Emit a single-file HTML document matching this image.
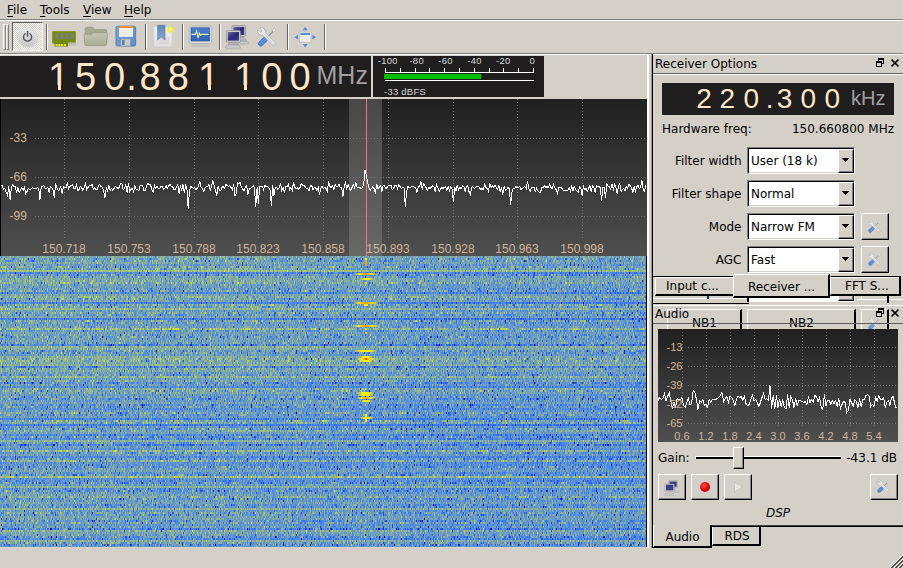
<!DOCTYPE html>
<html><head><meta charset="utf-8"><title>Gqrx</title>
<style>
html,body{margin:0;padding:0;background:#d4d0c8;}
body{width:903px;height:568px;overflow:hidden;position:relative;font-family:"DejaVu Sans","Liberation Sans",sans-serif;font-size:12px;color:#000;}
#w{position:absolute;left:0;top:0;width:903px;height:568px;overflow:hidden;background:#d4d0c8;}
#w div,#w span,#w svg{position:absolute;box-sizing:border-box;}
.t{white-space:nowrap;line-height:14px;height:14px;}
.ar{font-family:"Liberation Sans",sans-serif;}
.hl{height:1px;}
.vl{width:1px;}
.dk{background:#808080;}
.bk{background:#000;}
.wh{background:#fff;}
.sep{width:2px;border-left:1px solid #636363;border-right:1px solid #fff;}
.btn{background:#d4d0c8;border-top:1px solid #fff;border-left:1px solid #fff;border-right:1px solid #000;border-bottom:1px solid #000;box-shadow:inset -1px -1px 0 #808080;}
.cb{background:#fff;border:1px solid;border-color:#808080 #fff #fff #808080;box-shadow:inset 1px 1px 0 #000,inset -1px -1px 0 #d4d0c8;}
.cbb{background:#d4d0c8;border-top:1px solid #fff;border-left:1px solid #fff;border-right:1px solid #000;border-bottom:1px solid #000;box-shadow:inset -1px -1px 0 #808080;}
.dig{font-family:"Liberation Sans",sans-serif;color:#ffe6c8;white-space:nowrap;}
.pl{font-family:"Liberation Sans",sans-serif;font-size:12px;color:#d0b49a;white-space:nowrap;line-height:12px;height:12px;}
u{text-decoration:underline;text-decoration-thickness:1px;text-underline-offset:2px;}
</style></head><body><div id="w">

<span class="t" style="left:7px;top:3px"><u>F</u>ile</span>
<span class="t" style="left:40px;top:3px"><u>T</u>ools</span>
<span class="t" style="left:83px;top:3px"><u>V</u>iew</span>
<span class="t" style="left:124px;top:3px"><u>H</u>elp</span>
<div class="hl dk" style="left:0;top:19px;width:903px"></div>
<div class="hl wh" style="left:0;top:20px;width:903px"></div>
<div class="hl dk" style="left:0;top:53px;width:903px"></div>
<div class="hl wh" style="left:0;top:54px;width:903px"></div>
<div style="left:3px;top:24px;width:3px;height:26px;border-left:1px solid #fff;border-top:1px solid #fff;border-right:1px solid #808080;border-bottom:1px solid #808080"></div>
<div style="left:6px;top:24px;width:3px;height:26px;border-left:1px solid #fff;border-top:1px solid #fff;border-right:1px solid #808080;border-bottom:1px solid #808080"></div>
<div style="left:12px;top:22px;width:31px;height:29px;border-top:1px solid #606060;border-left:1px solid #606060;border-right:1px solid #fff;border-bottom:1px solid #fff;background:conic-gradient(#fff 25%,#d4d0c8 0 50%,#fff 0 75%,#d4d0c8 0) 0 0/2px 2px"></div>
<svg style="left:16px;top:26px" width="24" height="24" viewBox="0 0 24 24">
<defs><linearGradient id="pg" x1="0" y1="0" x2="0" y2="1"><stop offset="0" stop-color="#e6e6e6"/><stop offset="1" stop-color="#c6c6c6"/></linearGradient></defs>
<circle cx="11.6" cy="11.6" r="10.2" fill="#bdbbb5" opacity="0.55"/><circle cx="11.6" cy="11.2" r="10" fill="url(#pg)" stroke="#d8d8d8" stroke-width="0.8"/>
<path d="M9.2 7.7 A4.1 4.1 0 1 0 13.9 7.7" fill="none" stroke="#585858" stroke-width="1.4" stroke-linecap="round"/>
<path d="M11.55 5.4 V10.2" stroke="#585858" stroke-width="1.4" stroke-linecap="round"/>
</svg>
<div class="sep" style="left:46px;top:24px;height:26px"></div>
<div class="sep" style="left:145px;top:24px;height:26px"></div>
<div class="sep" style="left:182px;top:24px;height:26px"></div>
<div class="sep" style="left:219px;top:24px;height:26px"></div>
<div class="sep" style="left:287px;top:24px;height:26px"></div>
<div class="sep" style="left:324px;top:24px;height:26px"></div>
<svg style="left:50px;top:25px" width="28" height="24" viewBox="0 0 28 24">
<rect x="2" y="6" width="24" height="12.5" rx="1.5" fill="#748a12"/>
<rect x="2.5" y="6.5" width="23" height="11.5" rx="1.2" fill="none" stroke="#8ea02a" stroke-width="0.8"/>
<rect x="4.5" y="17.5" width="13.5" height="4" fill="#6f8212"/>
<rect x="18" y="17.5" width="8" height="3" fill="#bdbbb3" opacity="0.9"/>
<g fill="#7d7f7a"><rect x="5.2" y="8" width="3.2" height="6.2" rx="1"/><rect x="10.3" y="8" width="3.2" height="6.2" rx="1"/><rect x="15.4" y="8" width="3.2" height="6.2" rx="1"/><rect x="20.5" y="8" width="3.2" height="6.2" rx="1"/></g>
<g fill="#e6ee20"><rect x="5.5" y="19" width="2" height="2"/><rect x="8.3" y="19" width="2" height="2"/><rect x="11.1" y="19" width="2" height="2"/><rect x="13.9" y="19" width="2" height="2"/></g>
</svg>
<svg style="left:82px;top:24px" width="28" height="26" viewBox="0 0 28 26">
<defs><linearGradient id="fg" x1="0" y1="0" x2="0" y2="1"><stop offset="0" stop-color="#c3c6b4"/><stop offset="1" stop-color="#a9ad97"/></linearGradient></defs>
<path d="M3.2 5.5 Q3.2 3.2 5 3.2 H10.5 L12.5 5.6 H23.5 Q24.6 5.6 24.6 7 V20 H3.2 Z" fill="#a6a994" stroke="#94977f" stroke-width="0.8"/>
<path d="M2 11.5 Q2 10.2 3.5 10.2 H9.5 L11.5 8.6 H24.2 Q25.6 8.6 25.4 10 L24.4 20.5 Q24.2 21.6 23 21.6 H4.2 Q3 21.6 2.9 20.5 Z" fill="url(#fg)" stroke="#95987f" stroke-width="0.8"/>
</svg>
<svg style="left:114px;top:24px" width="24" height="26" viewBox="0 0 24 26">
<defs><linearGradient id="sg" x1="0" y1="0" x2="1" y2="1"><stop offset="0" stop-color="#7fa6dc"/><stop offset="1" stop-color="#5b8bd0"/></linearGradient></defs>
<rect x="2" y="2.2" width="19.6" height="19.8" rx="1.5" fill="url(#sg)" stroke="#4a78b8" stroke-width="0.9"/>
<rect x="5" y="2.2" width="14" height="10.6" fill="#f4f4f2"/>
<rect x="5" y="2.2" width="14" height="1.8" fill="#f08228"/>
<g stroke="#dcdcd8" stroke-width="0.7"><path d="M5 6.2H19M5 8.2H19M5 10.2H19"/></g>
<rect x="6.6" y="15" width="10" height="7" fill="#c9ccc8" stroke="#8a8f98" stroke-width="0.6"/>
<rect x="8" y="16" width="2.6" height="5" fill="#5b80b8"/>
</svg>
<svg style="left:150px;top:23px" width="26" height="27" viewBox="0 0 26 27">
<defs><linearGradient id="bg1" x1="0" y1="0" x2="0" y2="1"><stop offset="0" stop-color="#f2f2f2"/><stop offset="1" stop-color="#dedede"/></linearGradient>
<linearGradient id="bg2" x1="0" y1="0" x2="0" y2="1"><stop offset="0" stop-color="#5f86b8"/><stop offset="1" stop-color="#8aa6cc"/></linearGradient>
<radialGradient id="yg"><stop offset="0" stop-color="#ffffc0"/><stop offset="0.45" stop-color="#f6ee30"/><stop offset="1" stop-color="#f0e63c" stop-opacity="0.1"/></radialGradient></defs>
<rect x="3.6" y="3.6" width="18.6" height="20.4" rx="1" fill="url(#bg1)" stroke="#c9c9c9" stroke-width="0.8"/>
<rect x="9" y="14" width="10" height="7" fill="#d6d6d6" opacity="0.7"/>
<path d="M7.6 2.2 H15 V17 L11.3 14 L7.6 17 Z" fill="url(#bg2)" stroke="#5578a8" stroke-width="0.6"/>
<circle cx="20.4" cy="6.6" r="4.2" fill="url(#yg)"/>
</svg>
<svg style="left:187px;top:24px" width="27" height="26" viewBox="0 0 27 26">
<defs><linearGradient id="mg" x1="0" y1="0" x2="0" y2="1"><stop offset="0" stop-color="#4d7fd0"/><stop offset="1" stop-color="#2f5fb0"/></linearGradient></defs>
<rect x="2" y="2" width="22.6" height="17.6" rx="2" fill="#dcdcd8" stroke="#b4b4b0" stroke-width="0.9"/>
<rect x="4" y="3.8" width="18.6" height="13.2" fill="url(#mg)" stroke="#2a4f98" stroke-width="0.6"/>
<path d="M4.5 10.4 H8.4 L9.6 7 L11 14 L12.4 9 L13.4 11.2 L14.6 10.4 H22" fill="none" stroke="#d8f5b0" stroke-width="1.1"/>
<path d="M6 19.8 H20.6 L22.4 22.4 H4.2 Z" fill="#c8c8c4" stroke="#aaa" stroke-width="0.5"/>
</svg>
<svg style="left:223px;top:23px" width="28" height="28" viewBox="0 0 28 28">
<defs><linearGradient id="cg" x1="0" y1="0" x2="1" y2="1"><stop offset="0" stop-color="#6a6aa8"/><stop offset="0.5" stop-color="#2c2a78"/><stop offset="1" stop-color="#3c3a88"/></linearGradient></defs>
<rect x="9" y="2.6" width="13.6" height="11" rx="1" fill="#c6c6c6" stroke="#8c8c8c" stroke-width="0.7"/>
<rect x="10.4" y="4" width="10.8" height="8" fill="url(#cg)"/>
<path d="M14 14 H20 L24 18 H17 Z" fill="#bdbdbd" stroke="#909090" stroke-width="0.5"/>
<path d="M16 18.4 H25 L25.4 21 H17 Z" fill="#c9c9c9" stroke="#999" stroke-width="0.5"/>
<rect x="3.4" y="7.6" width="14" height="11.6" rx="1" fill="#cfcfcf" stroke="#8c8c8c" stroke-width="0.7"/>
<rect x="4.8" y="9" width="11.2" height="8.6" fill="url(#cg)"/>
<path d="M6 19.4 H14.6 L15.2 21.4 H5.2 Z" fill="#b8b8b8" stroke="#909090" stroke-width="0.5"/>
<path d="M3.6 22 H16.4 L17.4 25.2 H2.4 Z" fill="#cdcdcd" stroke="#999" stroke-width="0.6"/>
</svg>
<svg style="left:256px;top:26px;opacity:1.0" width="24" height="24" viewBox="0 0 24 24">
<g transform="translate(19.2 3.2) rotate(135)">
<path d="M0 -1.5 L0 1.5 L3.2 0.7 L3.2 -0.7 Z" fill="#f4f4f4" stroke="#a0a0a0" stroke-width="0.5"/>
<rect x="3.2" y="-0.55" width="9" height="1.1" fill="#8c8c8c"/>
<rect x="12.2" y="-2.4" width="10.6" height="4.8" rx="2" fill="#4a80d0" stroke="#3a6ab8" stroke-width="0.6"/>
<path d="M13.4 -0.9 H21.6 M13.4 0.9 H21.6" stroke="#79a3e2" stroke-width="0.7" fill="none"/>
</g>
<g transform="translate(5.5 5.4) rotate(-45)">
<rect x="-1.8" y="1.5" width="3.6" height="18.2" rx="1.8" fill="#ededed" stroke="#a4a4a4" stroke-width="0.7"/>
<circle r="3.8" fill="#ededed" stroke="#a4a4a4" stroke-width="0.7"/>
<rect x="-1.45" y="1.2" width="2.9" height="4" fill="#ededed"/>
<path d="M-1.3 -4.6 V-1 A1.3 1.3 0 0 0 1.3 -1 V-4.6 Z" fill="#d4d0c8"/>
<path d="M-1.3 -3.5 V-1 A1.3 1.3 0 0 0 1.3 -1 V-3.5" fill="none" stroke="#a4a4a4" stroke-width="0.6"/>
<rect x="-0.5" y="4.5" width="1" height="11" fill="#c3d2dc"/>
<circle cy="17.6" r="0.7" fill="#b0b0b0"/>
</g>
</svg>
<svg style="left:292px;top:25px" width="26" height="24" viewBox="0 0 26 24">
<rect x="7.4" y="7" width="11.6" height="10.2" fill="#ececec" stroke="#bdbdbd" stroke-width="0.8"/>
<rect x="8.4" y="8" width="9.6" height="2" fill="#5f8fd0"/>
<g fill="#5a8ad0"><path d="M13.2 1.8 L15.6 5.2 H10.8 Z"/><path d="M13.2 22.4 L15.6 19 H10.8 Z"/><path d="M2.4 12.2 L6 9.8 V14.6 Z"/><path d="M24 12.2 L20.4 9.8 V14.6 Z"/></g>
</svg>
<div style="left:0;top:56px;width:371px;height:41px;background:#1f1d1d"></div>
<span class="dig" style="left:43.5px;top:55.5px;width:30px;text-align:center;font-size:38px;line-height:42px">1</span>
<div style="left:50.0px;top:85px;width:8.0px;height:6px;background:#1f1d1d"></div>
<div style="left:61.0px;top:85px;width:7px;height:6px;background:#1f1d1d"></div>
<span class="dig" style="left:70.5px;top:55.5px;width:30px;text-align:center;font-size:38px;line-height:42px">5</span>
<span class="dig" style="left:99.5px;top:55.5px;width:30px;text-align:center;font-size:38px;line-height:42px">0</span>
<span class="dig" style="left:135px;top:55.5px;width:30px;text-align:center;font-size:38px;line-height:42px">8</span>
<span class="dig" style="left:163.4px;top:55.5px;width:30px;text-align:center;font-size:38px;line-height:42px">8</span>
<span class="dig" style="left:193.5px;top:55.5px;width:30px;text-align:center;font-size:38px;line-height:42px">1</span>
<div style="left:200.0px;top:85px;width:8.0px;height:6px;background:#1f1d1d"></div>
<div style="left:211.0px;top:85px;width:7px;height:6px;background:#1f1d1d"></div>
<span class="dig" style="left:229.5px;top:55.5px;width:30px;text-align:center;font-size:38px;line-height:42px">1</span>
<div style="left:236.0px;top:85px;width:8.0px;height:6px;background:#1f1d1d"></div>
<div style="left:247.0px;top:85px;width:7px;height:6px;background:#1f1d1d"></div>
<span class="dig" style="left:256.8px;top:55.5px;width:30px;text-align:center;font-size:38px;line-height:42px">0</span>
<span class="dig" style="left:285px;top:55.5px;width:30px;text-align:center;font-size:38px;line-height:42px">0</span>
<span class="dig" style="left:121.5px;top:55.5px;width:20px;text-align:center;font-size:38px;line-height:42px">.</span>
<span class="dig" style="left:316.5px;top:60px;font-size:25px;line-height:30px;color:#a0a0a4">MHz</span>
<div style="left:373px;top:56px;width:171px;height:41px;background:#1f1d1d"></div>
<svg style="left:373px;top:56px" width="171" height="41" shape-rendering="crispEdges">
<path d="M12 16.5 H161" stroke="#fff" fill="none"/>
<path d="M12.5 12 V17" stroke="#fff" fill="none"/>
<path d="M27.5 12 V17" stroke="#fff" fill="none"/>
<path d="M42.5 12 V17" stroke="#fff" fill="none"/>
<path d="M56.5 12 V17" stroke="#fff" fill="none"/>
<path d="M71.5 12 V17" stroke="#fff" fill="none"/>
<path d="M86.5 12 V17" stroke="#fff" fill="none"/>
<path d="M101.5 12 V17" stroke="#fff" fill="none"/>
<path d="M116.5 12 V17" stroke="#fff" fill="none"/>
<path d="M130.5 12 V17" stroke="#fff" fill="none"/>
<path d="M145.5 12 V17" stroke="#fff" fill="none"/>
<path d="M160.5 12 V17" stroke="#fff" fill="none"/>
<rect x="11" y="18" width="97" height="5" fill="#00be00"/>
<path d="M12 24.5 H161" stroke="#fff" fill="none"/>
</svg>
<span class="ar" style="left:367.8px;top:55px;width:40px;text-align:center;font-size:9.4px;letter-spacing:0.35px;line-height:12px;color:#dadada">-100</span>
<span class="ar" style="left:396.7px;top:55px;width:40px;text-align:center;font-size:9.4px;letter-spacing:0.35px;line-height:12px;color:#dadada">-80</span>
<span class="ar" style="left:425.6px;top:55px;width:40px;text-align:center;font-size:9.4px;letter-spacing:0.35px;line-height:12px;color:#dadada">-60</span>
<span class="ar" style="left:454.5px;top:55px;width:40px;text-align:center;font-size:9.4px;letter-spacing:0.35px;line-height:12px;color:#dadada">-40</span>
<span class="ar" style="left:483.4px;top:55px;width:40px;text-align:center;font-size:9.4px;letter-spacing:0.35px;line-height:12px;color:#dadada">-20</span>
<span class="ar" style="left:512.3px;top:55px;width:40px;text-align:center;font-size:9.4px;letter-spacing:0.35px;line-height:12px;color:#dadada">0</span>
<span class="ar" style="left:384px;top:85.5px;font-size:9.4px;letter-spacing:0.3px;line-height:12px;color:#dadada;white-space:nowrap">-33 dBFS</span>
<div style="left:0;top:99px;width:647px;height:157px;background:linear-gradient(#202020,#4f4f4f)"></div>
<div style="left:0;top:99px;width:1px;height:157px;background:#000"></div>
<svg style="left:0;top:99px" width="647" height="157" shape-rendering="crispEdges">
<rect x="349" y="0" width="33" height="157" fill="#a0a0a4" fill-opacity="0.31"/>
<path d="M35 39.5 H647" stroke="#6e6e6e" stroke-dasharray="1 2" fill="none"/>
<path d="M35 78.5 H647" stroke="#6e6e6e" stroke-dasharray="1 2" fill="none"/>
<path d="M35 117.5 H647" stroke="#6e6e6e" stroke-dasharray="1 2" fill="none"/>
<path d="M64.5 0 V139" stroke="#6e6e6e" stroke-dasharray="1 2" fill="none"/>
<path d="M129.5 0 V139" stroke="#6e6e6e" stroke-dasharray="1 2" fill="none"/>
<path d="M194.5 0 V139" stroke="#6e6e6e" stroke-dasharray="1 2" fill="none"/>
<path d="M258.5 0 V139" stroke="#6e6e6e" stroke-dasharray="1 2" fill="none"/>
<path d="M323.5 0 V139" stroke="#6e6e6e" stroke-dasharray="1 2" fill="none"/>
<path d="M388.5 0 V139" stroke="#6e6e6e" stroke-dasharray="1 2" fill="none"/>
<path d="M453.5 0 V139" stroke="#6e6e6e" stroke-dasharray="1 2" fill="none"/>
<path d="M517.5 0 V139" stroke="#6e6e6e" stroke-dasharray="1 2" fill="none"/>
<path d="M582.5 0 V139" stroke="#6e6e6e" stroke-dasharray="1 2" fill="none"/>
<path d="M366.5 0 V157" stroke="#ff7171" fill="none"/>
<polyline points="1,86.5 2.3,86.5 3.6,90.5 4.9,89.5 6.2,93.5 7.5,96.5 8.8,87.5 10.1,100.5 11.4,88.5 12.7,85.5 14,87.5 15.3,87.5 16.6,93.5 17.9,88.5 19.2,93.5 20.5,90.5 21.8,88.5 23.1,91.5 24.4,87.5 25.7,94.5 27,92.5 28.3,89.5 29.6,90.5 30.9,90.5 32.2,88.5 33.5,89.5 34.8,89.5 36.1,89.5 37.4,88.5 38.7,89.5 40,100.5 41.3,87.5 42.6,87.5 43.9,86.5 45.2,89.5 46.5,89.5 47.8,88.5 49.1,93.5 50.4,87.5 51.7,88.5 53,90.5 54.3,98.5 55.6,84.5 56.9,88.5 58.2,91.5 59.5,90.5 60.8,87.5 62.1,94.5 63.4,87.5 64.7,88.5 66,88.5 67.3,84.5 68.6,89.5 69.9,87.5 71.2,86.5 72.5,85.5 73.8,89.5 75.1,89.5 76.4,85.5 77.7,91.5 79,90.5 80.3,87.5 81.6,88.5 82.9,91.5 84.2,88.5 85.5,84.5 86.8,90.5 88.1,88.5 89.4,86.5 90.7,86.5 92,85.5 93.3,90.5 94.6,88.5 95.9,90.5 97.2,90.5 98.5,86.5 99.8,85.5 101.1,87.5 102.4,88.5 103.7,92.5 105,98.5 106.3,88.5 107.6,91.5 108.9,86.5 110.2,91.5 111.5,89.5 112.8,91.5 114.1,89.5 115.4,87.5 116.7,88.5 118,89.5 119.3,88.5 120.6,84.5 121.9,84.5 123.2,90.5 124.5,89.5 125.8,85.5 127.1,93.5 128.4,84.5 129.7,92.5 131,90.5 132.3,89.5 133.6,92.5 134.9,86.5 136.2,90.5 137.5,90.5 138.8,91.5 140.1,86.5 141.4,86.5 142.7,86.5 144,91.5 145.3,91.5 146.6,86.5 147.9,84.5 149.2,85.5 150.5,85.5 151.8,90.5 153.1,93.5 154.4,86.5 155.7,89.5 157,87.5 158.3,89.5 159.6,89.5 160.9,87.5 162.2,87.5 163.5,90.5 164.8,89.5 166.1,86.5 167.4,89.5 168.7,86.5 170,85.5 171.3,87.5 172.6,87.5 173.9,90.5 175.2,90.5 176.5,88.5 177.8,85.5 179.1,94.5 180.4,86.5 181.7,91.5 183,85.5 184.3,93.5 185.6,86.5 186.9,89.5 188.2,109.5 189.5,91.5 190.8,87.5 192.1,88.5 193.4,89.5 194.7,88.5 196,90.5 197.3,89.5 198.6,86.5 199.9,82.5 201.2,88.5 202.5,89.5 203.8,92.5 205.1,88.5 206.4,87.5 207.7,87.5 209,85.5 210.3,91.5 211.6,86.5 212.9,81.5 214.2,86.5 215.5,91.5 216.8,96.5 218.1,87.5 219.4,91.5 220.7,91.5 222,88.5 223.3,87.5 224.6,89.5 225.9,85.5 227.2,86.5 228.5,87.5 229.8,86.5 231.1,88.5 232.4,90.5 233.7,85.5 235,96.5 236.3,94.5 237.6,83.5 238.9,84.5 240.2,83.5 241.5,88.5 242.8,90.5 244.1,91.5 245.4,87.5 246.7,86.5 248,95.5 249.3,89.5 250.6,89.5 251.9,88.5 253.2,86.5 254.5,89.5 255.8,107.5 257.1,88.5 258.4,104.5 259.7,87.5 261,87.5 262.3,87.5 263.6,90.5 264.9,86.5 266.2,87.5 267.5,87.5 268.8,88.5 270.1,91.5 271.4,106.5 272.7,86.5 274,96.5 275.3,88.5 276.6,88.5 277.9,90.5 279.2,88.5 280.5,84.5 281.8,91.5 283.1,88.5 284.4,93.5 285.7,87.5 287,87.5 288.3,85.5 289.6,90.5 290.9,88.5 292.2,91.5 293.5,83.5 294.8,88.5 296.1,89.5 297.4,88.5 298.7,90.5 300,88.5 301.3,84.5 302.6,86.5 303.9,86.5 305.2,87.5 306.5,89.5 307.8,89.5 309.1,91.5 310.4,86.5 311.7,86.5 313,90.5 314.3,88.5 315.6,88.5 316.9,91.5 318.2,88.5 319.5,95.5 320.8,89.5 322.1,87.5 323.4,89.5 324.7,88.5 326,89.5 327.3,92.5 328.6,82.5 329.9,87.5 331.2,88.5 332.5,86.5 333.8,90.5 335.1,85.5 336.4,87.5 337.7,87.5 339,85.5 340.3,88.5 341.6,88.5 342.9,97.5 344.2,87.5 345.5,83.5 346.8,89.5 348.1,85.5 349.4,89.5 350.7,91.5 352,88.5 353.3,85.5 354.6,88.5 355.9,83.5 357.2,88.5 358.5,88.5 359.8,88.5 361.1,89.5 362.4,88.5 363.7,85.5 365,71.5 366.3,75.5 367.6,83.5 368.9,88.5 370.2,91.5 371.5,89.5 372.8,87.5 374.1,89.5 375.4,94.5 376.7,85.5 378,89.5 379.3,88.5 380.6,86.5 381.9,92.5 383.2,86.5 384.5,86.5 385.8,89.5 387.1,88.5 388.4,86.5 389.7,86.5 391,86.5 392.3,90.5 393.6,89.5 394.9,86.5 396.2,86.5 397.5,89.5 398.8,85.5 400.1,87.5 401.4,89.5 402.7,88.5 404,88.5 405.3,107.5 406.6,92.5 407.9,87.5 409.2,88.5 410.5,88.5 411.8,87.5 413.1,87.5 414.4,88.5 415.7,88.5 417,93.5 418.3,87.5 419.6,87.5 420.9,82.5 422.2,90.5 423.5,84.5 424.8,86.5 426.1,88.5 427.4,91.5 428.7,88.5 430,89.5 431.3,88.5 432.6,86.5 433.9,87.5 435.2,92.5 436.5,85.5 437.8,88.5 439.1,92.5 440.4,90.5 441.7,88.5 443,89.5 444.3,88.5 445.6,87.5 446.9,91.5 448.2,87.5 449.5,91.5 450.8,87.5 452.1,90.5 453.4,102.5 454.7,88.5 456,91.5 457.3,86.5 458.6,90.5 459.9,88.5 461.2,89.5 462.5,86.5 463.8,87.5 465.1,92.5 466.4,87.5 467.7,86.5 469,92.5 470.3,95.5 471.6,88.5 472.9,87.5 474.2,89.5 475.5,88.5 476.8,87.5 478.1,87.5 479.4,88.5 480.7,90.5 482,89.5 483.3,90.5 484.6,85.5 485.9,88.5 487.2,89.5 488.5,92.5 489.8,84.5 491.1,88.5 492.4,86.5 493.7,88.5 495,86.5 496.3,88.5 497.6,90.5 498.9,86.5 500.2,92.5 501.5,88.5 502.8,95.5 504.1,87.5 505.4,91.5 506.7,90.5 508,88.5 509.3,89.5 510.6,105.5 511.9,93.5 513.2,89.5 514.5,89.5 515.8,87.5 517.1,88.5 518.4,88.5 519.7,87.5 521,90.5 522.3,89.5 523.6,88.5 524.9,87.5 526.2,89.5 527.5,82.5 528.8,89.5 530.1,92.5 531.4,88.5 532.7,88.5 534,88.5 535.3,92.5 536.6,89.5 537.9,91.5 539.2,93.5 540.5,93.5 541.8,88.5 543.1,88.5 544.4,86.5 545.7,88.5 547,87.5 548.3,88.5 549.6,85.5 550.9,88.5 552.2,89.5 553.5,85.5 554.8,88.5 556.1,90.5 557.4,94.5 558.7,88.5 560,88.5 561.3,88.5 562.6,90.5 563.9,91.5 565.2,91.5 566.5,91.5 567.8,91.5 569.1,88.5 570.4,92.5 571.7,87.5 573,91.5 574.3,87.5 575.6,90.5 576.9,91.5 578.2,93.5 579.5,87.5 580.8,88.5 582.1,96.5 583.4,87.5 584.7,90.5 586,89.5 587.3,92.5 588.6,89.5 589.9,86.5 591.2,92.5 592.5,86.5 593.8,88.5 595.1,93.5 596.4,86.5 597.7,87.5 599,87.5 600.3,88.5 601.6,101.5 602.9,88.5 604.2,88.5 605.5,98.5 606.8,84.5 608.1,87.5 609.4,87.5 610.7,90.5 612,85.5 613.3,90.5 614.6,85.5 615.9,88.5 617.2,94.5 618.5,87.5 619.8,84.5 621.1,92.5 622.4,90.5 623.7,89.5 625,91.5 626.3,87.5 627.6,89.5 628.9,85.5 630.2,86.5 631.5,88.5 632.8,93.5 634.1,87.5 635.4,92.5 636.7,87.5 638,86.5 639.3,89.5 640.6,88.5 641.9,81.5 643.2,90.5 644.5,92.5 645.8,86.5" stroke="#fff" fill="none" stroke-width="1"/>
</svg>
<span class="pl" style="left:9.5px;top:132px">-33</span>
<span class="pl" style="left:9.5px;top:171px">-66</span>
<span class="pl" style="left:9.5px;top:210px">-99</span>
<span class="pl" style="left:34px;top:243px;width:60px;text-align:center">150.718</span>
<span class="pl" style="left:99px;top:243px;width:60px;text-align:center">150.753</span>
<span class="pl" style="left:164px;top:243px;width:60px;text-align:center">150.788</span>
<span class="pl" style="left:228px;top:243px;width:60px;text-align:center">150.823</span>
<span class="pl" style="left:293px;top:243px;width:60px;text-align:center">150.858</span>
<span class="pl" style="left:358px;top:243px;width:60px;text-align:center">150.893</span>
<span class="pl" style="left:423px;top:243px;width:60px;text-align:center">150.928</span>
<span class="pl" style="left:487px;top:243px;width:60px;text-align:center">150.963</span>
<span class="pl" style="left:552px;top:243px;width:60px;text-align:center">150.998</span>
<svg style="left:0;top:256px" width="647" height="291">
<defs><linearGradient id="rp" x1="0" y1="0" x2="0" y2="1"><stop offset="0.0000" stop-color="rgb(147,147,147)"/><stop offset="0.0275" stop-color="rgb(142,142,142)"/><stop offset="0.0687" stop-color="rgb(142,142,142)"/><stop offset="0.2062" stop-color="rgb(138,138,138)"/><stop offset="0.3299" stop-color="rgb(138,138,138)"/><stop offset="0.3505" stop-color="rgb(158,158,158)"/><stop offset="0.3780" stop-color="rgb(158,158,158)"/><stop offset="0.3986" stop-color="rgb(138,138,138)"/><stop offset="0.4467" stop-color="rgb(132,132,132)"/><stop offset="0.5155" stop-color="rgb(128,128,128)"/><stop offset="0.6873" stop-color="rgb(128,128,128)"/><stop offset="0.8247" stop-color="rgb(132,132,132)"/><stop offset="1.0000" stop-color="rgb(132,132,132)"/></linearGradient><linearGradient id="hp" x1="0" y1="0" x2="1" y2="0"><stop offset="0.0000" stop-color="rgb(136,136,136)"/><stop offset="0.3096" stop-color="rgb(134,134,134)"/><stop offset="0.5108" stop-color="rgb(129,129,129)"/><stop offset="0.6502" stop-color="rgb(124,124,124)"/><stop offset="1.0000" stop-color="rgb(122,122,122)"/></linearGradient>
<filter id="wf" x="0" y="0" width="646" height="291" filterUnits="userSpaceOnUse" color-interpolation-filters="sRGB">
<feTurbulence type="fractalNoise" baseFrequency="0.78 0.87" numOctaves="1" seed="3"/>
<feColorMatrix type="matrix" values="1 0 0 0 0  1 0 0 0 0  1 0 0 0 0  0 0 0 0 1"/>
<feComponentTransfer result="a"><feFuncR type="table" tableValues="0.1203 0.1326 0.1450 0.1573 0.1696 0.1819 0.1942 0.2065 0.2188 0.2312 0.2435 0.2558 0.2681 0.2804 0.2927 0.3050 0.3174 0.3297 0.3420 0.3543 0.3666 0.3789 0.3894 0.3938 0.3981 0.4025 0.4069 0.4113 0.4157 0.4201 0.4245 0.4289 0.4333 0.4377 0.4421 0.4465 0.4509 0.4553 0.4597 0.4641 0.4685 0.4729 0.4773 0.4817 0.4876 0.4951 0.5025 0.5100 0.5175 0.5250 0.5324 0.5399 0.5474 0.5549 0.5624 0.5698 0.5773 0.5848 0.5923 0.5997 0.6072 0.6147 0.6222 0.6296 0.6371"/><feFuncG type="table" tableValues="0.1203 0.1326 0.1450 0.1573 0.1696 0.1819 0.1942 0.2065 0.2188 0.2312 0.2435 0.2558 0.2681 0.2804 0.2927 0.3050 0.3174 0.3297 0.3420 0.3543 0.3666 0.3789 0.3894 0.3938 0.3981 0.4025 0.4069 0.4113 0.4157 0.4201 0.4245 0.4289 0.4333 0.4377 0.4421 0.4465 0.4509 0.4553 0.4597 0.4641 0.4685 0.4729 0.4773 0.4817 0.4876 0.4951 0.5025 0.5100 0.5175 0.5250 0.5324 0.5399 0.5474 0.5549 0.5624 0.5698 0.5773 0.5848 0.5923 0.5997 0.6072 0.6147 0.6222 0.6296 0.6371"/><feFuncB type="table" tableValues="0.1203 0.1326 0.1450 0.1573 0.1696 0.1819 0.1942 0.2065 0.2188 0.2312 0.2435 0.2558 0.2681 0.2804 0.2927 0.3050 0.3174 0.3297 0.3420 0.3543 0.3666 0.3789 0.3894 0.3938 0.3981 0.4025 0.4069 0.4113 0.4157 0.4201 0.4245 0.4289 0.4333 0.4377 0.4421 0.4465 0.4509 0.4553 0.4597 0.4641 0.4685 0.4729 0.4773 0.4817 0.4876 0.4951 0.5025 0.5100 0.5175 0.5250 0.5324 0.5399 0.5474 0.5549 0.5624 0.5698 0.5773 0.5848 0.5923 0.5997 0.6072 0.6147 0.6222 0.6296 0.6371"/></feComponentTransfer>
<feTurbulence type="fractalNoise" baseFrequency="0.00003 0.31" numOctaves="1" seed="8"/>
<feColorMatrix type="matrix" values="0.2 0 0 0 0  0.2 0 0 0 0  0.2 0 0 0 0  0 0 0 0 1" result="b"/>
<feComposite in="a" in2="b" operator="arithmetic" k1="0" k2="1" k3="1" k4="-0.1" result="ab"/>
<feComposite in="ab" in2="SourceGraphic" operator="arithmetic" k1="0" k2="1" k3="0.4" k4="-0.2"/>
<feComponentTransfer result="c">
<feFuncR type="table" tableValues="0 0 0 0 0 0 0 0 0 0 0 0 0 0 0 0.039 0.078 0.118 0.157 0.196 0.235 0.312 0.388 0.465 0.541 0.618 0.694 0.771 0.847 0.924 1 1 1 1 1 1 1 1 1 1 1 1 1 1 1 1 1 1 1 1 1 1"/>
<feFuncG type="table" tableValues="0 0 0 0 0 0 0 0 0 0 0 0 0 0 0 0.082 0.163 0.245 0.327 0.408 0.49 0.541 0.592 0.643 0.694 0.745 0.796 0.847 0.898 0.949 1 0.95 0.9 0.85 0.8 0.75 0.7 0.65 0.6 0.55 0.5 0.45 0.4 0.35 0.3 0.25 0.2 0.15 0.1 0.05 0 1"/>
<feFuncB type="table" tableValues="0 0 0 0 0 0.055 0.11 0.165 0.22 0.275 0.329 0.384 0.439 0.494 0.549 0.624 0.699 0.775 0.85 0.925 1 0.9 0.8 0.7 0.6 0.5 0.4 0.3 0.2 0.1 0 0 0 0 0 0 0 0 0 0 0 0 0 0 0 0 0 0 0 0 0 1"/>
</feComponentTransfer>
<feFlood x="0" y="0" width="646" height="1" flood-color="#000" result="f"/>
<feOffset in="f" dx="0" dy="0" x="0" y="0" width="646" height="2" result="t"/>
<feTile in="t" result="m"/>
<feComposite in="c" in2="m" operator="in" result="e"/>
<feOffset in="e" dx="0" dy="1" result="o"/>
<feMerge><feMergeNode in="o"/><feMergeNode in="e"/></feMerge>
</filter></defs>
<rect x="0" y="0" width="647" height="291" fill="#000"/><rect x="0" y="0" width="646" height="291" fill="#5f93d8"/>
<g filter="url(#wf)"><rect x="0" y="0" width="646" height="291" fill="url(#rp)"/><rect x="0" y="0" width="646" height="291" fill="url(#hp)" opacity="0.5"/></g>
</svg>
<svg style="left:340px;top:256px" width="52" height="291" shape-rendering="crispEdges">
<defs><linearGradient id="sm" x1="0" x2="1"><stop offset="0" stop-color="#e8e840" stop-opacity="0.2"/><stop offset="0.25" stop-color="#ffe600"/><stop offset="0.5" stop-color="#ff9a00"/><stop offset="0.75" stop-color="#ffe600"/><stop offset="1" stop-color="#e8e840" stop-opacity="0.2"/></linearGradient><linearGradient id="sy" x1="0" x2="1"><stop offset="0" stop-color="#e8e840" stop-opacity="0.2"/><stop offset="0.3" stop-color="#fff000"/><stop offset="0.7" stop-color="#fff000"/><stop offset="1" stop-color="#e8e840" stop-opacity="0.2"/></linearGradient></defs>
<rect x="25" y="2" width="2" height="2" fill="#ffe000"/>
<rect x="25" y="4" width="2" height="6" fill="#ffa000"/>
<rect x="14" y="17" width="23" height="2" fill="url(#sm)"/>
<rect x="21" y="22" width="12" height="2" fill="url(#sy)"/>
<rect x="25" y="26" width="2" height="2" fill="#ffc000"/>
<rect x="13" y="46" width="26" height="2" fill="url(#sm)"/>
<rect x="24" y="48" width="4" height="2" fill="#ffe800"/>
<rect x="12" y="69" width="27" height="2" fill="url(#sm)"/>
<rect x="25" y="76" width="2" height="2" fill="#ffc000"/>
<rect x="15" y="94" width="22" height="2" fill="url(#sy)"/>
<rect x="20" y="100" width="12" height="2" fill="url(#sy)"/>
<rect x="17" y="102" width="18" height="2" fill="url(#sm)"/>
<rect x="25" y="102" width="2" height="2" fill="#ff5000"/>
<rect x="19" y="104" width="14" height="2" fill="url(#sy)"/>
<rect x="18" y="136" width="15" height="4" fill="url(#sy)"/>
<rect x="17" y="141" width="18" height="2" fill="url(#sm)"/>
<rect x="21" y="144" width="10" height="2" fill="url(#sy)"/>
<rect x="20" y="161" width="13" height="2" fill="url(#sy)"/>
<rect x="25" y="158" width="2" height="8" fill="#ffe800"/>
</svg>
<div class="wh" style="left:647px;top:55px;width:2px;height:493px"></div>
<div style="left:652px;top:54px;width:1px;height:494px;background:#000"></div>
<div style="left:651px;top:54px;width:1px;height:494px;background:#9a9890"></div>
<span class="t" style="left:655px;top:57px">Receiver Options</span>
<svg style="left:876px;top:58px" width="9" height="9" shape-rendering="crispEdges"><rect x="2" y="0" width="6" height="2" fill="#000"/><path d="M2.5 2 V3 M7.5 0 V6 M6 5.5 H8" stroke="#000" fill="none"/><rect x="0" y="3" width="6" height="2" fill="#000"/><rect x="0.5" y="3.5" width="5" height="5" fill="none" stroke="#000"/></svg>
<svg style="left:891px;top:59px" width="8" height="8"><path d="M0.5 0.7 L7.5 7.3 M7.5 0.7 L0.5 7.3" stroke="#000" stroke-width="1.6" fill="none"/></svg>
<div class="hl" style="left:653px;top:73px;width:250px;background:#606060"></div>
<div class="hl wh" style="left:653px;top:74px;width:250px"></div>
<div style="left:662px;top:83px;width:232px;height:32px;background:#1f1d1d"></div>
<span class="dig" style="left:692px;top:83px;width:24px;text-align:center;font-size:28px;line-height:32px">2</span>
<span class="dig" style="left:715.2px;top:83px;width:24px;text-align:center;font-size:28px;line-height:32px">2</span>
<span class="dig" style="left:739.3px;top:83px;width:24px;text-align:center;font-size:28px;line-height:32px">0</span>
<span class="dig" style="left:772.6px;top:83px;width:24px;text-align:center;font-size:28px;line-height:32px">3</span>
<span class="dig" style="left:796.2px;top:83px;width:24px;text-align:center;font-size:28px;line-height:32px">0</span>
<span class="dig" style="left:820.2px;top:83px;width:24px;text-align:center;font-size:28px;line-height:32px">0</span>
<span class="dig" style="left:757.6px;top:83px;width:24px;text-align:center;font-size:28px;line-height:32px">.</span>
<span class="dig" style="left:851px;top:86px;font-size:20px;line-height:24px;color:#a0a0a4">kHz</span>
<span class="t" style="left:662px;top:122px">Hardware freq:</span>
<span class="t" style="left:694px;top:122px;width:200px;text-align:right">150.660800 MHz</span>
<span class="t" style="left:600px;top:154px;width:141.5px;text-align:right">Filter width</span>
<div class="cb" style="left:747px;top:147px;width:108px;height:27px"></div>
<span class="t" style="left:751px;top:154px">User (18 k)</span>
<div class="cbb" style="left:838px;top:149px;width:16px;height:24px"></div>
<svg style="left:842px;top:158px" width="8" height="5" shape-rendering="crispEdges"><path d="M0 0 H7 L3.5 4 Z" fill="#000"/></svg>
<span class="t" style="left:600px;top:187px;width:141.5px;text-align:right">Filter shape</span>
<div class="cb" style="left:747px;top:180px;width:108px;height:27px"></div>
<span class="t" style="left:751px;top:187px">Normal</span>
<div class="cbb" style="left:838px;top:182px;width:16px;height:24px"></div>
<svg style="left:842px;top:191px" width="8" height="5" shape-rendering="crispEdges"><path d="M0 0 H7 L3.5 4 Z" fill="#000"/></svg>
<span class="t" style="left:600px;top:220px;width:141.5px;text-align:right">Mode</span>
<div class="cb" style="left:747px;top:213px;width:108px;height:27px"></div>
<span class="t" style="left:751px;top:220px">Narrow FM</span>
<div class="cbb" style="left:838px;top:215px;width:16px;height:24px"></div>
<svg style="left:842px;top:224px" width="8" height="5" shape-rendering="crispEdges"><path d="M0 0 H7 L3.5 4 Z" fill="#000"/></svg>
<div class="btn" style="left:861px;top:213px;width:28px;height:27px"></div>
<svg style="left:867px;top:219px;opacity:0.9" width="16.08" height="16.08" viewBox="0 0 24 24">
<g transform="translate(19.2 3.2) rotate(135)">
<path d="M0 -1.5 L0 1.5 L3.2 0.7 L3.2 -0.7 Z" fill="#f4f4f4" stroke="#a0a0a0" stroke-width="0.5"/>
<rect x="3.2" y="-0.55" width="9" height="1.1" fill="#8c8c8c"/>
<rect x="12.2" y="-2.4" width="10.6" height="4.8" rx="2" fill="#4a80d0" stroke="#3a6ab8" stroke-width="0.6"/>
<path d="M13.4 -0.9 H21.6 M13.4 0.9 H21.6" stroke="#79a3e2" stroke-width="0.7" fill="none"/>
</g>
<g transform="translate(5.5 5.4) rotate(-45)">
<rect x="-1.8" y="1.5" width="3.6" height="18.2" rx="1.8" fill="#ededed" stroke="#a4a4a4" stroke-width="0.7"/>
<circle r="3.8" fill="#ededed" stroke="#a4a4a4" stroke-width="0.7"/>
<rect x="-1.45" y="1.2" width="2.9" height="4" fill="#ededed"/>
<path d="M-1.3 -4.6 V-1 A1.3 1.3 0 0 0 1.3 -1 V-4.6 Z" fill="#d4d0c8"/>
<path d="M-1.3 -3.5 V-1 A1.3 1.3 0 0 0 1.3 -1 V-3.5" fill="none" stroke="#a4a4a4" stroke-width="0.6"/>
<rect x="-0.5" y="4.5" width="1" height="11" fill="#c3d2dc"/>
<circle cy="17.6" r="0.7" fill="#b0b0b0"/>
</g>
</svg>
<span class="t" style="left:600px;top:253px;width:141.5px;text-align:right">AGC</span>
<div class="cb" style="left:747px;top:246px;width:108px;height:27px"></div>
<span class="t" style="left:751px;top:253px">Fast</span>
<div class="cbb" style="left:838px;top:248px;width:16px;height:24px"></div>
<svg style="left:842px;top:257px" width="8" height="5" shape-rendering="crispEdges"><path d="M0 0 H7 L3.5 4 Z" fill="#000"/></svg>
<div class="btn" style="left:861px;top:246px;width:28px;height:27px"></div>
<svg style="left:867px;top:252px;opacity:0.9" width="16.08" height="16.08" viewBox="0 0 24 24">
<g transform="translate(19.2 3.2) rotate(135)">
<path d="M0 -1.5 L0 1.5 L3.2 0.7 L3.2 -0.7 Z" fill="#f4f4f4" stroke="#a0a0a0" stroke-width="0.5"/>
<rect x="3.2" y="-0.55" width="9" height="1.1" fill="#8c8c8c"/>
<rect x="12.2" y="-2.4" width="10.6" height="4.8" rx="2" fill="#4a80d0" stroke="#3a6ab8" stroke-width="0.6"/>
<path d="M13.4 -0.9 H21.6 M13.4 0.9 H21.6" stroke="#79a3e2" stroke-width="0.7" fill="none"/>
</g>
<g transform="translate(5.5 5.4) rotate(-45)">
<rect x="-1.8" y="1.5" width="3.6" height="18.2" rx="1.8" fill="#ededed" stroke="#a4a4a4" stroke-width="0.7"/>
<circle r="3.8" fill="#ededed" stroke="#a4a4a4" stroke-width="0.7"/>
<rect x="-1.45" y="1.2" width="2.9" height="4" fill="#ededed"/>
<path d="M-1.3 -4.6 V-1 A1.3 1.3 0 0 0 1.3 -1 V-4.6 Z" fill="#d4d0c8"/>
<path d="M-1.3 -3.5 V-1 A1.3 1.3 0 0 0 1.3 -1 V-3.5" fill="none" stroke="#a4a4a4" stroke-width="0.6"/>
<rect x="-0.5" y="4.5" width="1" height="11" fill="#c3d2dc"/>
<circle cy="17.6" r="0.7" fill="#b0b0b0"/>
</g>
</svg>
<div style="left:747px;top:279px;width:108px;height:23px;background:#fff;border-left:2px solid #000"></div>
<div class="cbb" style="left:838px;top:281px;width:16px;height:20px"></div>
<div style="left:856px;top:295px;width:47px;height:9px;background:#d4d0c8"></div>
<div class="hl wh" style="left:857px;top:299px;width:46px"></div>
<div class="vl wh" style="left:861px;top:295px;height:5px"></div>
<div style="left:887px;top:295px;width:2px;height:8px;background:#000"></div>
<div style="left:653px;top:295px;width:94px;height:9px;background:#d4d0c8"></div>
<div class="hl wh" style="left:653px;top:298px;width:94px"></div>
<div class="hl bk" style="left:653px;top:303px;width:96px"></div>
<div style="left:707px;top:296px;width:2px;height:3px;background:#1a2a60"></div>
<div class="hl bk" style="left:653px;top:276px;width:81px"></div>
<div style="left:655px;top:277px;width:79px;height:19px;background:#d4d0c8;border-top:1px solid #fff;border-left:1px solid #fff;border-bottom:2px solid #000;border-right:0"></div>
<span class="t" style="left:666px;top:279px">Input c...</span>
<div style="left:830px;top:276px;width:71px;height:20px;background:#d4d0c8;border-top:1px solid #000;border-left:1px solid #fff;border-bottom:2px solid #000;border-right:2px solid #000;box-shadow:inset 0 1px 0 #fff"></div>
<span class="t" style="left:845px;top:279px">FFT S...</span>
<div style="left:733px;top:274px;width:97px;height:24px;background:#d4d0c8;border-top:1px solid #fff;border-left:1px solid #fff;border-bottom:2px solid #000;border-right:2px solid #000"></div>
<span class="t" style="left:748px;top:280px">Receiver ...</span>
<div style="left:653px;top:304px;width:250px;height:1px;background:#d4d0c8"></div>
<div class="hl wh" style="left:653px;top:305px;width:250px"></div>
<div style="left:653px;top:306px;width:250px;height:23px;background:#d4d0c8"></div>
<div style="left:667px;top:309px;width:75px;height:22px;border-top:1px solid #fff;border-left:1px solid #fff;border-right:2px solid #000"></div>
<div style="left:747px;top:309px;width:109px;height:22px;border-top:1px solid #fff;border-left:1px solid #fff;border-right:2px solid #000"></div>
<div style="left:861px;top:309px;width:28px;height:22px;border-top:1px solid #fff;border-left:1px solid #fff;border-right:2px solid #000"></div>
<span class="t" style="left:667px;top:316px;width:75px;text-align:center">NB1</span>
<span class="t" style="left:747px;top:316px;width:109px;text-align:center">NB2</span>
<svg style="left:867px;top:316px;opacity:0.8" width="16.08" height="16.08" viewBox="0 0 24 24">
<g transform="translate(19.2 3.2) rotate(135)">
<path d="M0 -1.5 L0 1.5 L3.2 0.7 L3.2 -0.7 Z" fill="#f4f4f4" stroke="#a0a0a0" stroke-width="0.5"/>
<rect x="3.2" y="-0.55" width="9" height="1.1" fill="#8c8c8c"/>
<rect x="12.2" y="-2.4" width="10.6" height="4.8" rx="2" fill="#4a80d0" stroke="#3a6ab8" stroke-width="0.6"/>
<path d="M13.4 -0.9 H21.6 M13.4 0.9 H21.6" stroke="#79a3e2" stroke-width="0.7" fill="none"/>
</g>
<g transform="translate(5.5 5.4) rotate(-45)">
<rect x="-1.8" y="1.5" width="3.6" height="18.2" rx="1.8" fill="#ededed" stroke="#a4a4a4" stroke-width="0.7"/>
<circle r="3.8" fill="#ededed" stroke="#a4a4a4" stroke-width="0.7"/>
<rect x="-1.45" y="1.2" width="2.9" height="4" fill="#ededed"/>
<path d="M-1.3 -4.6 V-1 A1.3 1.3 0 0 0 1.3 -1 V-4.6 Z" fill="#d4d0c8"/>
<path d="M-1.3 -3.5 V-1 A1.3 1.3 0 0 0 1.3 -1 V-3.5" fill="none" stroke="#a4a4a4" stroke-width="0.6"/>
<rect x="-0.5" y="4.5" width="1" height="11" fill="#c3d2dc"/>
<circle cy="17.6" r="0.7" fill="#b0b0b0"/>
</g>
</svg>
<div style="left:653px;top:329px;width:250px;height:4px;background:#d4d0c8"></div>
<span class="t" style="left:655px;top:307px">Audio</span>
<div class="hl" style="left:653px;top:323px;width:250px;background:#5a5a5a"></div>
<svg style="left:876px;top:308px" width="9" height="9" shape-rendering="crispEdges"><rect x="2" y="0" width="6" height="2" fill="#000"/><path d="M2.5 2 V3 M7.5 0 V6 M6 5.5 H8" stroke="#000" fill="none"/><rect x="0" y="3" width="6" height="2" fill="#000"/><rect x="0.5" y="3.5" width="5" height="5" fill="none" stroke="#000"/></svg>
<svg style="left:891px;top:309px" width="8" height="8"><path d="M0.5 0.7 L7.5 7.3 M7.5 0.7 L0.5 7.3" stroke="#000" stroke-width="1.6" fill="none"/></svg>
<div style="left:658px;top:329px;width:240px;height:113px;background:linear-gradient(#202020,#4f4f4f)"></div>
<svg style="left:658px;top:329px" width="240" height="113" shape-rendering="crispEdges">
<path d="M30 18.5 H240" stroke="#757575" stroke-dasharray="1 2" fill="none"/>
<path d="M30 37.5 H240" stroke="#757575" stroke-dasharray="1 2" fill="none"/>
<path d="M30 56.5 H240" stroke="#757575" stroke-dasharray="1 2" fill="none"/>
<path d="M30 75.5 H240" stroke="#757575" stroke-dasharray="1 2" fill="none"/>
<path d="M30 94.5 H240" stroke="#757575" stroke-dasharray="1 2" fill="none"/>
<path d="M24.5 0 V99" stroke="#757575" stroke-dasharray="1 2" fill="none"/>
<path d="M48.5 0 V99" stroke="#757575" stroke-dasharray="1 2" fill="none"/>
<path d="M72.5 0 V99" stroke="#757575" stroke-dasharray="1 2" fill="none"/>
<path d="M96.5 0 V99" stroke="#757575" stroke-dasharray="1 2" fill="none"/>
<path d="M120.5 0 V99" stroke="#757575" stroke-dasharray="1 2" fill="none"/>
<path d="M144.5 0 V99" stroke="#757575" stroke-dasharray="1 2" fill="none"/>
<path d="M168.5 0 V99" stroke="#757575" stroke-dasharray="1 2" fill="none"/>
<path d="M192.5 0 V99" stroke="#757575" stroke-dasharray="1 2" fill="none"/>
<path d="M216.5 0 V99" stroke="#757575" stroke-dasharray="1 2" fill="none"/>
<path d="M240.5 0 V99" stroke="#757575" stroke-dasharray="1 2" fill="none"/>
<polyline points="0,71.5 1.6,68.5 3.2,70.5 4.8,69.5 6.4,64.5 8,71.5 9.6,67.5 11.2,63.5 12.8,72.5 14.4,79.5 16,73.5 17.6,78.5 19.2,69.5 20.8,70.5 22.4,70.5 24,68.5 25.6,76.5 27.2,78.5 28.8,73.5 30.4,69.5 32,75.5 33.6,74.5 35.2,61.5 36.8,62.5 38.4,70.5 40,80.5 41.6,71.5 43.2,73.5 44.8,70.5 46.4,76.5 48,75.5 49.6,78.5 51.2,70.5 52.8,73.5 54.4,70.5 56,70.5 57.6,70.5 59.2,69.5 60.8,68.5 62.4,66.5 64,63.5 65.6,72.5 67.2,69.5 68.8,67.5 70.4,73.5 72,67.5 73.6,68.5 75.2,71.5 76.8,76.5 78.4,70.5 80,67.5 81.6,68.5 83.2,67.5 84.8,71.5 86.4,67.5 88,74.5 89.6,76.5 91.2,75.5 92.8,70.5 94.4,66.5 96,71.5 97.6,70.5 99.2,73.5 100.8,77.5 102.4,73.5 104,68.5 105.6,64.5 107.2,70.5 108.8,69.5 110.4,71.5 112,56.5 113.6,79.5 115.2,66.5 116.8,79.5 118.4,66.5 120,78.5 121.6,70.5 123.2,77.5 124.8,70.5 126.4,78.5 128,79.5 129.6,65.5 131.2,78.5 132.8,67.5 134.4,70.5 136,78.5 137.6,69.5 139.2,76.5 140.8,71.5 142.4,71.5 144,72.5 145.6,73.5 147.2,72.5 148.8,75.5 150.4,68.5 152,73.5 153.6,70.5 155.2,73.5 156.8,66.5 158.4,67.5 160,72.5 161.6,68.5 163.2,78.5 164.8,80.5 166.4,65.5 168,76.5 169.6,71.5 171.2,71.5 172.8,75.5 174.4,71.5 176,74.5 177.6,71.5 179.2,77.5 180.8,69.5 182.4,79.5 184,75.5 185.6,72.5 187.2,73.5 188.8,83.5 190.4,81.5 192,70.5 193.6,73.5 195.2,77.5 196.8,70.5 198.4,72.5 200,78.5 201.6,69.5 203.2,77.5 204.8,70.5 206.4,70.5 208,66.5 209.6,65.5 211.2,67.5 212.8,77.5 214.4,75.5 216,77.5 217.6,68.5 219.2,72.5 220.8,66.5 222.4,70.5 224,70.5 225.6,68.5 227.2,78.5 228.8,73.5 230.4,71.5 232,76.5 233.6,68.5 235.2,67.5 236.8,75.5 238.4,79.5" stroke="#fff" fill="none" stroke-width="1"/>
</svg>
<span class="pl" style="left:666.5px;top:340.5px;font-size:11px">-13</span>
<span class="pl" style="left:666.5px;top:359.5px;font-size:11px">-26</span>
<span class="pl" style="left:666.5px;top:378.5px;font-size:11px">-39</span>
<span class="pl" style="left:666.5px;top:397.5px;font-size:11px">-52</span>
<span class="pl" style="left:666.5px;top:416.5px;font-size:11px">-65</span>
<span class="pl" style="left:662px;top:430px;width:40px;text-align:center;font-size:11px">0.6</span>
<span class="pl" style="left:686px;top:430px;width:40px;text-align:center;font-size:11px">1.2</span>
<span class="pl" style="left:710px;top:430px;width:40px;text-align:center;font-size:11px">1.8</span>
<span class="pl" style="left:734px;top:430px;width:40px;text-align:center;font-size:11px">2.4</span>
<span class="pl" style="left:758px;top:430px;width:40px;text-align:center;font-size:11px">3.0</span>
<span class="pl" style="left:782px;top:430px;width:40px;text-align:center;font-size:11px">3.6</span>
<span class="pl" style="left:806px;top:430px;width:40px;text-align:center;font-size:11px">4.2</span>
<span class="pl" style="left:830px;top:430px;width:40px;text-align:center;font-size:11px">4.8</span>
<span class="pl" style="left:854px;top:430px;width:40px;text-align:center;font-size:11px">5.4</span>
<span class="t" style="left:658px;top:451px">Gain:</span>
<div class="hl wh" style="left:695px;top:456px;width:146px"></div>
<div class="vl wh" style="left:695px;top:456px;height:3px"></div>
<div style="left:696px;top:457px;width:145px;height:2px;background:#000"></div>
<div style="left:733px;top:447px;width:11px;height:22px;background:#d4d0c8;border-top:1px solid #fff;border-left:1px solid #fff;border-right:1px solid #000;border-bottom:1px solid #000;box-shadow:inset -1px -1px 0 #808080"></div>
<span class="t" style="left:797px;top:451px;width:100px;text-align:right">-43.1 dB</span>
<div class="btn" style="left:658px;top:474px;width:28px;height:26px"></div>
<div class="btn" style="left:691px;top:474px;width:28px;height:26px"></div>
<div class="btn" style="left:724px;top:474px;width:28px;height:26px"></div>
<div class="btn" style="left:870px;top:474px;width:28px;height:26px"></div>
<svg style="left:663px;top:478.5px" width="18" height="18" viewBox="0 0 28 28">
<rect x="9" y="2.6" width="13.6" height="11" rx="1" fill="#c6c6c6" stroke="#8c8c8c" stroke-width="0.7"/><rect x="10.4" y="4" width="10.8" height="8" fill="#3a3888"/>
<path d="M16 18.4 H25 L25.4 21 H17 Z" fill="#c9c9c9" stroke="#999" stroke-width="0.5"/>
<rect x="3.4" y="7.6" width="14" height="11.6" rx="1" fill="#cfcfcf" stroke="#8c8c8c" stroke-width="0.7"/><rect x="4.8" y="9" width="11.2" height="8.6" fill="#3a3888"/>
<path d="M3.6 22 H16.4 L17.4 25.2 H2.4 Z" fill="#cdcdcd" stroke="#999" stroke-width="0.6"/></svg>
<svg style="left:698px;top:480px" width="14" height="14"><defs><radialGradient id="rg" cx="0.4" cy="0.35"><stop offset="0" stop-color="#ff5050"/><stop offset="1" stop-color="#d80000"/></radialGradient></defs><circle cx="7" cy="7" r="5" fill="url(#rg)"/></svg>
<svg style="left:733px;top:481px" width="12" height="12"><path d="M1.5 1 L10 6 L1.5 11 Z" fill="#e4e2dc" stroke="#c4c0b8" stroke-width="0.8"/></svg>
<svg style="left:876px;top:479px;opacity:1" width="16.08" height="16.08" viewBox="0 0 24 24">
<g transform="translate(19.2 3.2) rotate(135)">
<path d="M0 -1.5 L0 1.5 L3.2 0.7 L3.2 -0.7 Z" fill="#f4f4f4" stroke="#a0a0a0" stroke-width="0.5"/>
<rect x="3.2" y="-0.55" width="9" height="1.1" fill="#8c8c8c"/>
<rect x="12.2" y="-2.4" width="10.6" height="4.8" rx="2" fill="#4a80d0" stroke="#3a6ab8" stroke-width="0.6"/>
<path d="M13.4 -0.9 H21.6 M13.4 0.9 H21.6" stroke="#79a3e2" stroke-width="0.7" fill="none"/>
</g>
<g transform="translate(5.5 5.4) rotate(-45)">
<rect x="-1.8" y="1.5" width="3.6" height="18.2" rx="1.8" fill="#ededed" stroke="#a4a4a4" stroke-width="0.7"/>
<circle r="3.8" fill="#ededed" stroke="#a4a4a4" stroke-width="0.7"/>
<rect x="-1.45" y="1.2" width="2.9" height="4" fill="#ededed"/>
<path d="M-1.3 -4.6 V-1 A1.3 1.3 0 0 0 1.3 -1 V-4.6 Z" fill="#d4d0c8"/>
<path d="M-1.3 -3.5 V-1 A1.3 1.3 0 0 0 1.3 -1 V-3.5" fill="none" stroke="#a4a4a4" stroke-width="0.6"/>
<rect x="-0.5" y="4.5" width="1" height="11" fill="#c3d2dc"/>
<circle cy="17.6" r="0.7" fill="#b0b0b0"/>
</g>
</svg>
<span class="t" style="left:728px;top:506px;width:100px;text-align:center;font-style:italic">DSP</span>
<div class="hl" style="left:712px;top:525px;width:191px;background:#404040"></div>
<div class="hl bk" style="left:711px;top:526px;width:192px"></div>
<div style="left:653px;top:525px;width:59px;height:23px;border-left:1px solid #fff;border-bottom:2px solid #000;border-right:2px solid #000"></div>
<div style="left:712px;top:527px;width:49px;height:19px;border-bottom:2px solid #000;border-right:2px solid #000;border-left:1px solid #fff"></div>
<span class="t" style="left:653px;top:530px;width:59px;text-align:center">Audio</span>
<span class="t" style="left:712.5px;top:529px;width:49px;text-align:center">RDS</span>
<svg style="left:889px;top:554px" width="14" height="14" shape-rendering="crispEdges"><path d="M1 13h1v1h-1zM2 12h1v1h-1zM3 11h1v1h-1zM4 10h1v1h-1zM5 9h1v1h-1zM6 8h1v1h-1zM7 7h1v1h-1zM8 6h1v1h-1zM9 5h1v1h-1zM10 4h1v1h-1zM11 3h1v1h-1zM12 2h1v1h-1zM13 1h1v1h-1zM5 13h1v1h-1zM6 12h1v1h-1zM7 11h1v1h-1zM8 10h1v1h-1zM9 9h1v1h-1zM10 8h1v1h-1zM11 7h1v1h-1zM12 6h1v1h-1zM13 5h1v1h-1zM9 13h1v1h-1zM10 12h1v1h-1zM11 11h1v1h-1zM12 10h1v1h-1zM13 9h1v1h-1z" fill="#fff"/><path d="M2 13h1v1h-1zM3 12h1v1h-1zM4 11h1v1h-1zM5 10h1v1h-1zM6 9h1v1h-1zM7 8h1v1h-1zM8 7h1v1h-1zM9 6h1v1h-1zM10 5h1v1h-1zM11 4h1v1h-1zM12 3h1v1h-1zM13 2h1v1h-1zM3 13h1v1h-1zM4 12h1v1h-1zM5 11h1v1h-1zM6 10h1v1h-1zM7 9h1v1h-1zM8 8h1v1h-1zM9 7h1v1h-1zM10 6h1v1h-1zM11 5h1v1h-1zM12 4h1v1h-1zM13 3h1v1h-1zM6 13h1v1h-1zM7 12h1v1h-1zM8 11h1v1h-1zM9 10h1v1h-1zM10 9h1v1h-1zM11 8h1v1h-1zM12 7h1v1h-1zM13 6h1v1h-1zM7 13h1v1h-1zM8 12h1v1h-1zM9 11h1v1h-1zM10 10h1v1h-1zM11 9h1v1h-1zM12 8h1v1h-1zM13 7h1v1h-1zM10 13h1v1h-1zM11 12h1v1h-1zM12 11h1v1h-1zM13 10h1v1h-1zM11 13h1v1h-1zM12 12h1v1h-1zM13 11h1v1h-1z" fill="#4a4a46"/></svg>
</div></body></html>
